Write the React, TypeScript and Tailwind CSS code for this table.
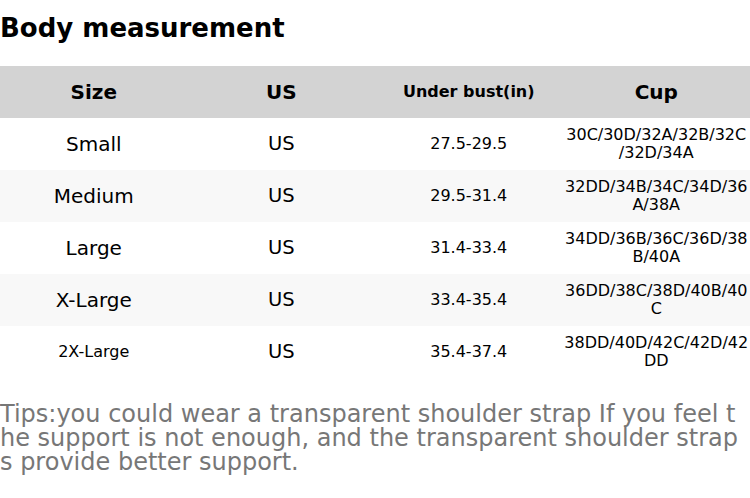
import React from "react";

const rows = [
  { size: "Small", sizeCls: "text-[20px]", us: "US", bust: "27.5-29.5", cup: "30C/30D/32A/32B/32C/32D/34A" },
  { size: "Medium", sizeCls: "text-[20px]", us: "US", bust: "29.5-31.4", cup: "32DD/34B/34C/34D/36A/38A" },
  { size: "Large", sizeCls: "text-[20px]", us: "US", bust: "31.4-33.4", cup: "34DD/36B/36C/36D/38B/40A" },
  { size: "X-Large", sizeCls: "text-[20px]", us: "US", bust: "33.4-35.4", cup: "36DD/38C/38D/40B/40C" },
  { size: "2X-Large", sizeCls: "text-[16px]", us: "US", bust: "35.4-37.4", cup: "38DD/40D/42C/42D/42DD" },
];

function Cell({ cls, children }: { cls: string; children: React.ReactNode }) {
  return (
    <div className={`flex h-[52px] items-center px-[1.5px] ${cls}`}>
      <div className="w-full text-center [overflow-wrap:anywhere] leading-[1.15]">{children}</div>
    </div>
  );
}

export default function App() {
  return (
    <div
      className="w-[750px] h-[498px] bg-white text-black overflow-hidden"
      style={{ fontFamily: '"DejaVu Sans", sans-serif' }}
    >
      <h2 className="pt-[13px] text-[26px] font-bold leading-[30px]">Body measurement</h2>
      <div className="mt-[23px] grid grid-cols-4">
        <Cell cls="bg-[#d3d3d3] font-bold text-[20px]">Size</Cell>
        <Cell cls="bg-[#d3d3d3] font-bold text-[20px]">US</Cell>
        <Cell cls="bg-[#d3d3d3] font-bold text-[16px]">Under bust(in)</Cell>
        <Cell cls="bg-[#d3d3d3] font-bold text-[20px]">Cup</Cell>
        {rows.map((r, i) => {
          const bg = i % 2 === 1 ? "bg-[#f8f8f8]" : "bg-white";
          return (
            <React.Fragment key={r.size}>
              <Cell cls={`${bg} ${r.sizeCls}`}>{r.size}</Cell>
              <Cell cls={`${bg} text-[19.5px]`}>{r.us}</Cell>
              <Cell cls={`${bg} text-[16px]`}>{r.bust}</Cell>
              <Cell cls={`${bg} text-[16px]`}>{r.cup}</Cell>
            </React.Fragment>
          );
        })}
      </div>
      <p className="mt-[24px] text-[24px] leading-[24px] text-[#777777] break-all">
        Tips:you could wear a transparent shoulder strap If you feel the support is not enough, and the transparent shoulder straps provide better support.
      </p>
    </div>
  );
}
